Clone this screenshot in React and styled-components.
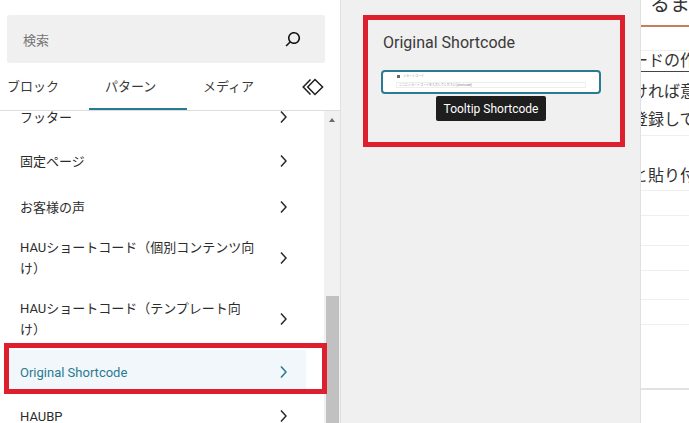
import React from "react";
import styled, { createGlobalStyle } from "styled-components";

const GlobalStyle = createGlobalStyle`
	html, body {
		margin: 0;
		padding: 0;
		background: #fff;
	}

	body {
		font-family: Roboto, "Noto Sans CJK JP", sans-serif;
		color: #1e1e1e;
	}
`;

const items = [
	{ label: "フッター", height: 38 },
	{ label: "固定ページ", height: 50 },
	{ label: "お客様の声", height: 42 },
	{ label: "HAUショートコード（個別コンテンツ向\nけ）", height: 60 },
	{ label: "HAUショートコード（テンプレート向\nけ）", height: 62 },
	{ label: "Original Shortcode", height: 44, active: true },
	{ label: "HAUBP", height: 44 },
];

function SearchIcon() {
	return (
		<svg width="24" height="24" viewBox="0 0 24 24" fill="currentColor">
			<path d="M13 5c-3.3 0-6 2.7-6 6 0 1.4.5 2.7 1.3 3.7l-3.8 3.8 1.1 1.1 3.8-3.8c1 .8 2.3 1.3 3.7 1.3 3.3 0 6-2.7 6-6S16.3 5 13 5zm0 10.5c-2.5 0-4.5-2-4.5-4.5s2-4.5 4.5-4.5 4.5 2 4.5 4.5-2 4.5-4.5 4.5z" />
		</svg>
	);
}

function ChevronIcon() {
	return (
		<svg width="24" height="24" viewBox="0 0 24 24" fill="currentColor">
			<path d="M10.6 6 9.4 7l4.6 5-4.6 5 1.2 1 5.4-6z" />
		</svg>
	);
}

function DiamondIcon() {
	return (
		<svg width="22" height="18" viewBox="0 0 22 18" fill="none" stroke="currentColor" strokeWidth="1.5">
			<path d="M8.5 1.5 1.2 9l7.3 7.5" />
			<path d="M13 1.5 5.7 9l7.3 7.5L20.6 9z" />
		</svg>
	);
}

export default function App() {
	return (
		<>
			<GlobalStyle />
			<Page>
				<Sidebar>
					<SearchWrap>
						<SearchBox>
							<SearchLabel>検索</SearchLabel>
							<SearchIcon />
						</SearchBox>
					</SearchWrap>
					<Tabs>
						<Tab $first>ブロック</Tab>
						<Tab $active>パターン</Tab>
						<Tab>メディア</Tab>
						<TabIcon>
							<DiamondIcon />
						</TabIcon>
					</Tabs>
					<ListArea>
						<List>
							{items.map((item) => (
								<Item key={item.label} $active={item.active} $height={item.height}>
									<ItemLabel>{item.label}</ItemLabel>
									<ChevronIcon />
								</Item>
							))}
						</List>
						<ScrollTrack>
							<ScrollArrow />
							<ScrollThumb />
						</ScrollTrack>
					</ListArea>
					<Highlight />
				</Sidebar>

				<Preview>
					<PreviewFrame>
						<PreviewTitle>Original Shortcode</PreviewTitle>
						<Thumb>
							<ThumbTitle>
								<ThumbMark />
								ショートコード
							</ThumbTitle>
							<ThumbField>ここにショートコードを入力してください [shortcode]</ThumbField>
						</Thumb>
						<Tooltip>Tooltip Shortcode</Tooltip>
					</PreviewFrame>
				</Preview>

				<Content>
					<Heading>るま</Heading>
					<Para>
						<Underlined>ードの作</Underlined>
						<Line>ければ意</Line>
						<Line>登録して</Line>
					</Para>
					<Row $height={54} $pad={26}>
						<Line>と貼り付</Line>
					</Row>
					<Row $height={25} />
					<Row $height={30} />
					<Row $height={25} />
					<Row $height={29} />
					<Row $height={25} />
					<Footer />
				</Content>
			</Page>
		</>
	);
}

const Page = styled.div`
	position: relative;
	display: flex;
	width: 689px;
	height: 423px;
	overflow: hidden;
`;

const Sidebar = styled.aside`
	position: relative;
	display: flex;
	flex-direction: column;
	flex: 0 0 341px;
	background: #fff;
	border-right: 1px solid #e0e0e0;
	box-sizing: border-box;
`;

const SearchWrap = styled.div`
	padding: 15px 15px 0 7px;
`;

const SearchBox = styled.div`
	display: flex;
	align-items: center;
	justify-content: space-between;
	height: 48px;
	padding: 0 20px 0 16px;
	background: #f0f0f0;
	border-radius: 2px;
	color: #111;
`;

const SearchLabel = styled.span`
	font-size: 13px;
	color: #757575;
`;

const Tabs = styled.div`
	display: flex;
	align-items: stretch;
	height: 48px;
	border-bottom: 1px solid #ddd;
	box-sizing: border-box;
`;

const Tab = styled.div`
	display: flex;
	align-items: center;
	width: ${(p) => (p.$first ? "89px" : "98px")};
	padding: 0 0 2px ${(p) => (p.$first ? "7px" : "16px")};
	box-sizing: border-box;
	font-size: 13px;
	color: #3a3a3a;
	white-space: nowrap;
	box-shadow: ${(p) => (p.$active ? "inset 0 -2px 0 #2a7a92" : "none")};
`;

const TabIcon = styled.div`
	display: flex;
	align-items: center;
	margin-left: 17px;
	color: #1e1e1e;
`;

const ListArea = styled.div`
	display: flex;
	flex: 1;
	min-height: 0;
	overflow: hidden;
`;

const List = styled.div`
	flex: 1;
	padding: 0 18px 0 8px;
	margin-top: -13px;
`;

const Item = styled.div`
	display: flex;
	align-items: center;
	justify-content: space-between;
	height: ${(p) => p.$height}px;
	padding: 0 11px 0 12px;
	background: ${(p) => (p.$active ? "#f1f7fb" : "transparent")};
	color: ${(p) => (p.$active ? "#2a7a92" : "#2c2c2c")};
`;

const ItemLabel = styled.span`
	font-size: 13px;
	line-height: 21px;
	white-space: pre-line;
`;

const ScrollTrack = styled.div`
	display: flex;
	flex-direction: column;
	flex: 0 0 16px;
	background: #f1f1f1;
`;

const ScrollArrow = styled.div`
	width: 0;
	height: 0;
	margin: 7px auto 0;
	border-left: 3.5px solid transparent;
	border-right: 3.5px solid transparent;
	border-bottom: 4px solid #6a6a6a;
`;

const ScrollThumb = styled.div`
	height: 127px;
	margin: auto 1px 0 2px;
	background: #c1c1c1;
`;

const Highlight = styled.div`
	position: absolute;
	left: 4px;
	top: 343px;
	width: 323px;
	height: 51px;
	border: 5px solid #de1f2e;
	box-sizing: border-box;
`;

const Preview = styled.section`
	flex: 0 0 299px;
	padding: 15px 0 0 22px;
	background: #f0f0f0;
	box-sizing: border-box;
`;

const PreviewFrame = styled.div`
	display: flex;
	flex-direction: column;
	align-items: center;
	width: 262px;
	height: 132px;
	padding: 13px 19px 0 13px;
	border: 5px solid #de1f2e;
	box-sizing: border-box;
`;

const PreviewTitle = styled.h2`
	align-self: flex-start;
	margin: 0 0 17px 2px;
	font-size: 16px;
	font-weight: 400;
	line-height: 20px;
	color: #3a3a3a;
`;

const Thumb = styled.div`
	display: flex;
	flex-direction: column;
	gap: 2px;
	flex-shrink: 0;
	width: 220px;
	height: 24px;
	padding: 1px 13px;
	background: #fff;
	border: 2px solid #2a7a92;
	border-radius: 4px;
	box-sizing: border-box;
	color: #888;
`;

const ThumbTitle = styled.div`
	display: flex;
	align-items: center;
	gap: 3px;
	padding-left: 1px;
	font-size: 3px;
	line-height: 7px;
`;

const ThumbMark = styled.span`
	width: 3px;
	height: 3px;
	background: #666;
`;

const ThumbField = styled.div`
	height: 6px;
	padding-left: 2px;
	font-size: 3px;
	line-height: 5px;
	border: 1px solid #eee;
	box-sizing: border-box;
	overflow: hidden;
`;

const Tooltip = styled.div`
	flex-shrink: 0;
	width: 110px;
	height: 25px;
	margin-top: 2px;
	background: #1e1e1e;
	border-radius: 2px;
	font-size: 12px;
	line-height: 27px;
	text-align: center;
	color: #fff;
`;

const Content = styled.main`
	display: flex;
	flex-direction: column;
	flex: 1;
	min-width: 0;
	background: #fff;
	border-left: 1px solid #e0e0e0;
	overflow: hidden;
	white-space: nowrap;
`;

const Heading = styled.div`
	flex: 0 0 27px;
	padding-left: 9px;
	font-size: 20px;
	line-height: 8px;
	color: #333;
	border-bottom: 2px solid #c47f60;
	box-sizing: border-box;
`;

const Para = styled.div`
	display: flex;
	flex-direction: column;
	flex: 0 0 86px;
	margin-top: 23px;
	border-top: 1px solid #eee;
	border-bottom: 1px solid #eee;
	box-sizing: border-box;
`;

const Line = styled.div`
	height: 28px;
	margin-left: -9px;
	font-size: 16px;
	line-height: 28px;
	color: #333;
`;

const Underlined = styled.div`
	height: 21px;
	margin-bottom: 6px;
	text-indent: -9px;
	font-size: 16px;
	line-height: 20px;
	color: #333;
	border-bottom: 1px solid #444;
	box-sizing: border-box;
`;

const Row = styled.div`
	flex: 0 0 ${(p) => p.$height}px;
	padding-top: ${(p) => p.$pad || 0}px;
	border-bottom: 1px solid #eee;
	box-sizing: border-box;
`;

const Footer = styled.div`
	margin-top: 63px;
	border-top: 2px solid #e2e2e2;
`;
